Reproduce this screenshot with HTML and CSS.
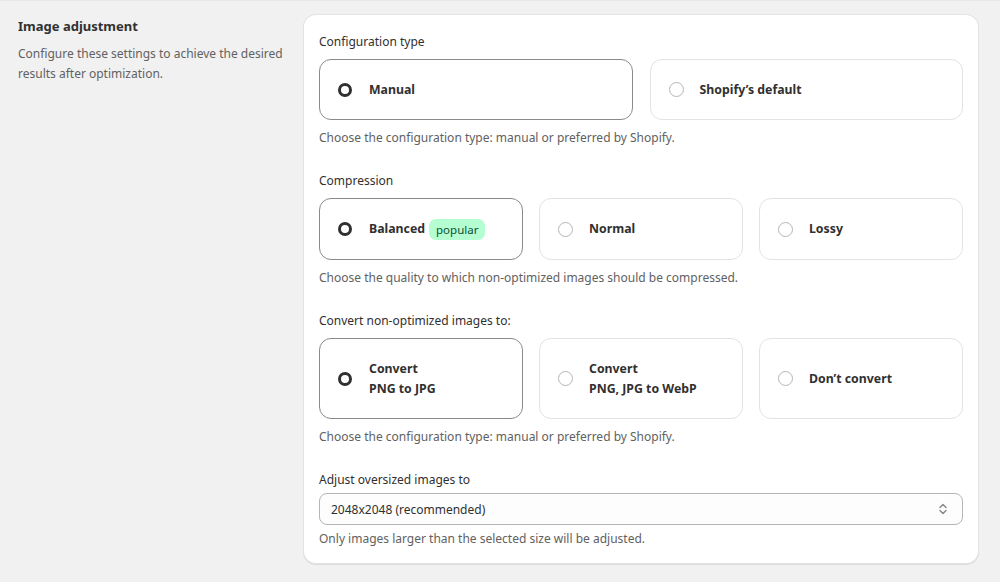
FILE: index.html
```html
<!DOCTYPE html>
<html>
<head>
<meta charset="utf-8">
<link rel="stylesheet" href="styles.css">
</head>
<body>
<div class="page">
  <div class="intro">
    <h2 class="title">Image adjustment</h2>
    <p class="desc">Configure these settings to achieve the desired results after optimization.</p>
  </div>
  <div class="card">
    <div class="field">
      <div class="label">Configuration type</div>
      <div class="options two">
        <div class="opt selected"><span class="radio on"></span><span class="opt-text">Manual</span></div>
        <div class="opt"><span class="radio"></span><span class="opt-text">Shopify’s default</span></div>
      </div>
      <div class="help">Choose the configuration type: manual or preferred by Shopify.</div>
    </div>
    <div class="field">
      <div class="label">Compression</div>
      <div class="options three">
        <div class="opt selected"><span class="radio on"></span><span class="opt-text">Balanced</span><span class="badge">popular</span></div>
        <div class="opt"><span class="radio"></span><span class="opt-text">Normal</span></div>
        <div class="opt"><span class="radio"></span><span class="opt-text">Lossy</span></div>
      </div>
      <div class="help">Choose the quality to which non-optimized images should be compressed.</div>
    </div>
    <div class="field">
      <div class="label">Convert non-optimized images to:</div>
      <div class="options three tall">
        <div class="opt selected"><span class="radio on"></span><span class="opt-text">Convert<br>PNG to JPG</span></div>
        <div class="opt"><span class="radio"></span><span class="opt-text">Convert<br>PNG, JPG to WebP</span></div>
        <div class="opt"><span class="radio"></span><span class="opt-text">Don’t convert</span></div>
      </div>
      <div class="help">Choose the configuration type: manual or preferred by Shopify.</div>
    </div>
    <div class="field last">
      <div class="label">Adjust oversized images to</div>
      <div class="select">
        <span>2048x2048 (recommended)</span>
        <svg class="chev" width="10" height="14" viewBox="0 0 10 14"><path d="M2 5.5 L5 2.5 L8 5.5 M2 8.5 L5 11.5 L8 8.5" fill="none" stroke="#8a8a8a" stroke-width="1.5" stroke-linecap="round" stroke-linejoin="round"/></svg>
      </div>
      <div class="help">Only images larger than the selected size will be adjusted.</div>
    </div>
  </div>
</div>
</body>
</html>
```
FILE: styles.css
```css
* { box-sizing: border-box; }
html, body { margin: 0; padding: 0; }
body {
  background: #f1f1f1;
  font-family: "Noto Sans", "Open Sans", sans-serif;
  color: #303030;
  width: 1000px;
  height: 582px;
  overflow: hidden;
  border-top: 1px solid #e8e8e8;
}
.page {
  display: flex;
  padding: 14px 22px 0 18px;
  gap: 16px;
}
.intro { width: 270px; flex-shrink: 0; padding-top: 1px; }
.title {
  margin: 0;
  font-size: 13px;
  font-weight: 700;
  line-height: 20px;
  color: #303030;
}
.desc {
  margin: 8px 0 0;
  font-size: 12px;
  line-height: 20px;
  color: #616161;
}
.card {
  flex: 1;
  background: #fff;
  border-radius: 12px;
  box-shadow: 0 0 0 1px #e3e3e3, 0 1px 0 1px #dcdcdc;
  padding: 18px 15px 14px 15px;
}
.field { margin-bottom: 24px; }
.field.last { margin-bottom: 0; }
.label {
  font-size: 12px;
  line-height: 18px;
  color: #303030;
  margin-bottom: 8px;
}
.options { display: grid; gap: 16px; }
.options.two { grid-template-columns: 1fr 1fr; gap: 17px; }
.options.three { grid-template-columns: 1fr 1fr 1fr; }
.opt {
  height: 61px;
  border: 1px solid #e3e3e3;
  border-radius: 12px;
  display: flex;
  align-items: center;
  padding-left: 17px;
  background: #fff;
}
.options.three .opt { height: 62px; }
.options.tall .opt { height: 81px; }
.opt.selected { border-color: #8a8a8a; }
.radio {
  width: 15px;
  height: 15px;
  border-radius: 50%;
  border: 1px solid #b5b5b5;
  flex-shrink: 0;
  margin-right: 16px;
  margin-left: 1px;
}
.radio.on {
  width: 14px;
  height: 14px;
  border: 3.5px solid #303030;
  margin-right: 17px;
}
.opt-text {
  font-size: 12.3px;
  font-weight: 700;
  line-height: 20px;
  color: #303030;
}
.badge {
  margin-left: 4px;
  background: #b4fed2;
  color: #0c5132;
  font-size: 11.5px;
  line-height: 21px;
  padding: 0 7px;
  border-radius: 7px;
}
.help {
  margin-top: 8px;
  font-size: 12px;
  line-height: 20px;
  color: #616161;
}
.select {
  height: 32px;
  border: 1px solid #b5b5b5;
  border-radius: 8px;
  background: #fdfdfd;
  display: flex;
  align-items: center;
  justify-content: space-between;
  padding: 0 14px 0 11px;
  font-size: 12px;
  color: #303030;
}
.chev { display: block; }
.field.last .label { margin-bottom: 4px; }
.field.last .help { margin-top: 4px; }
```
